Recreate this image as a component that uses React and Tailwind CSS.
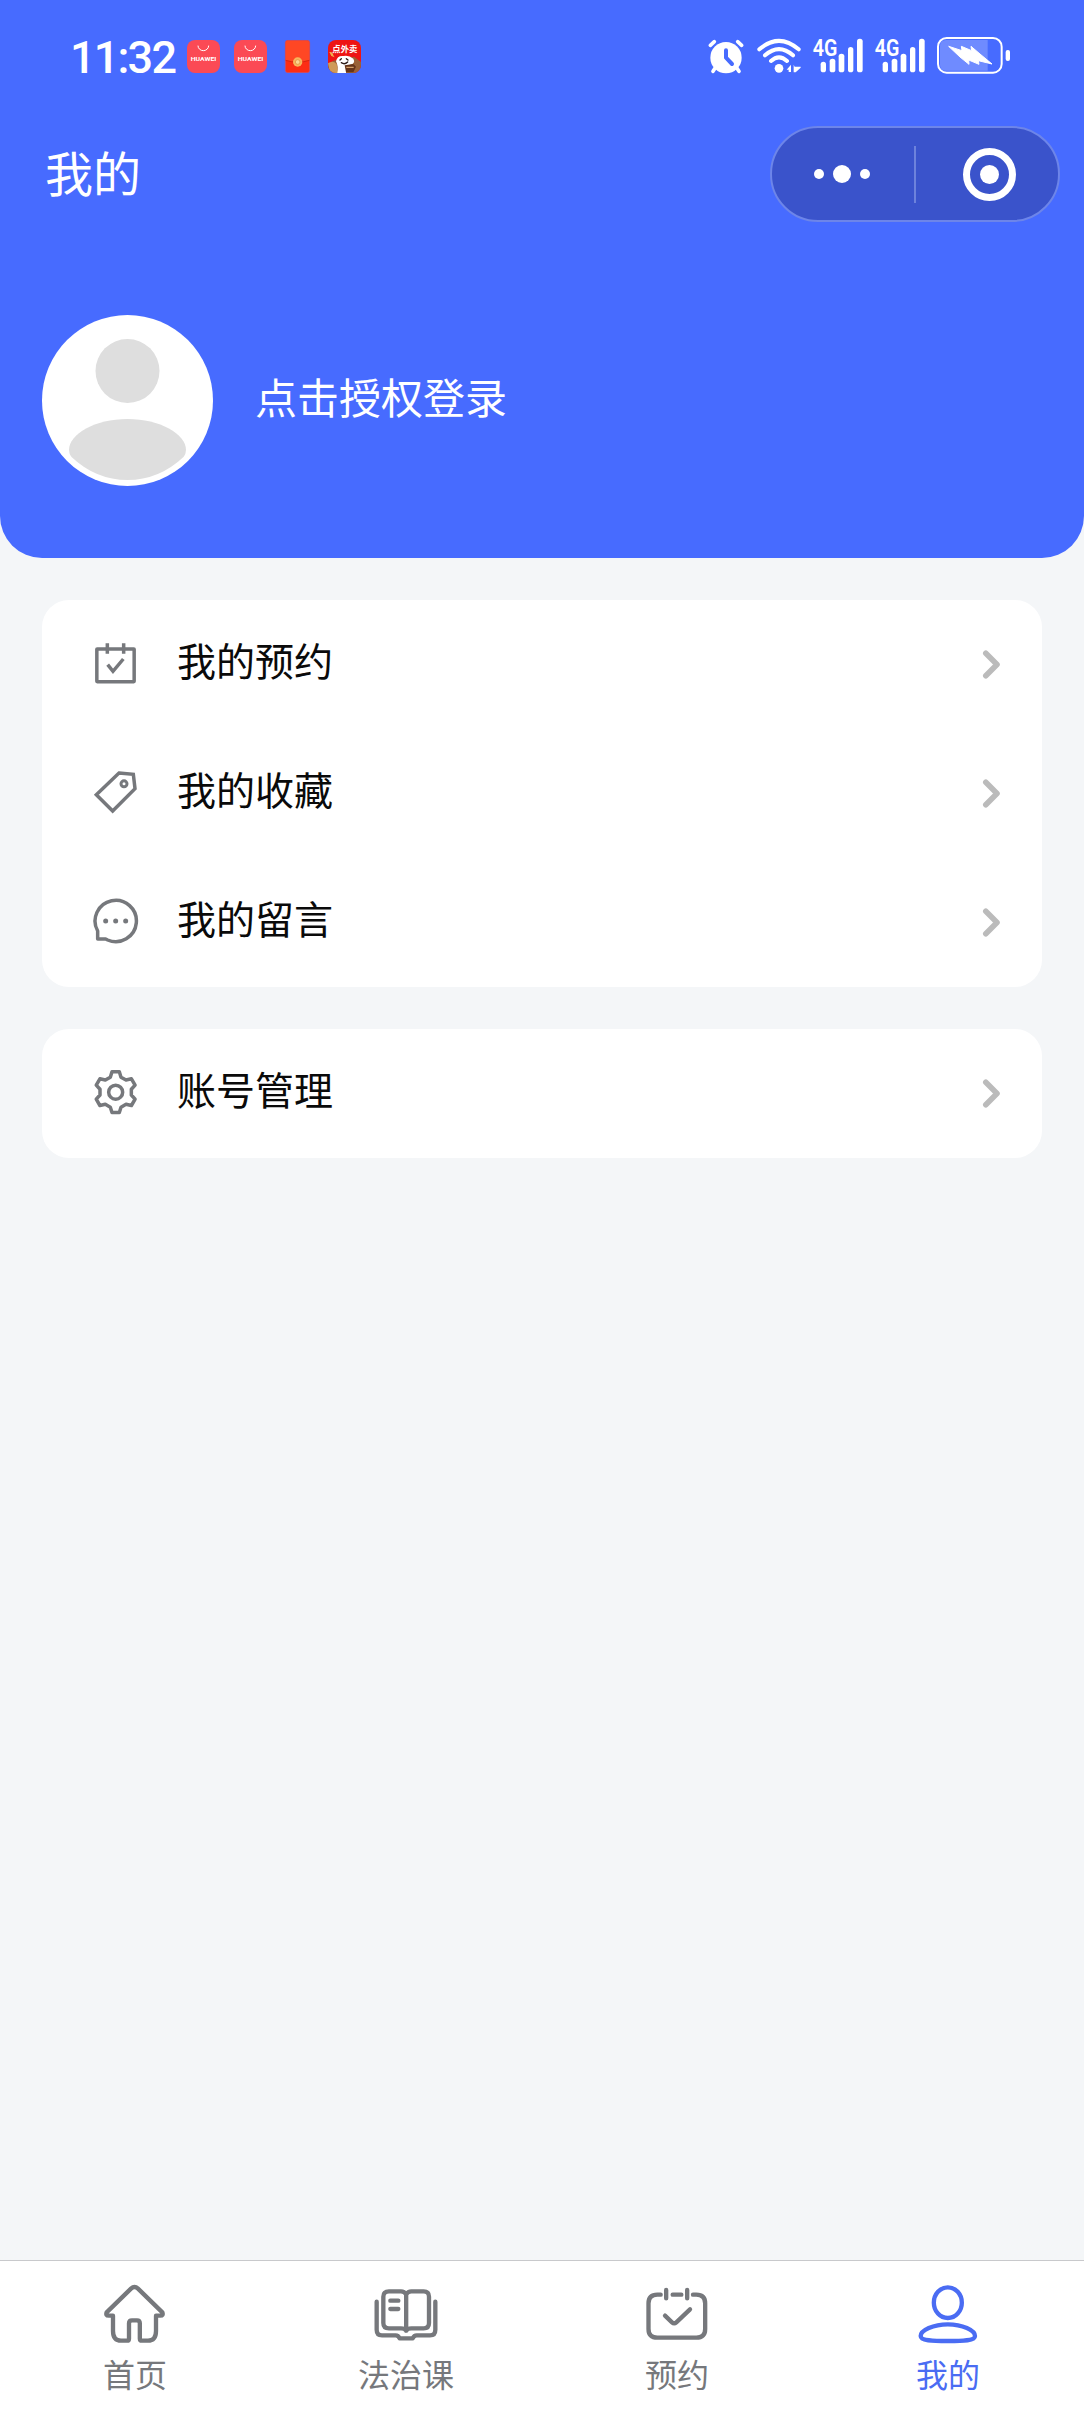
import React, { useState } from 'react';

// --- Status bar icons ---
const AlarmIcon = () => (
  <svg className="w-[39px] h-[42px]" viewBox="0 0 117 126" fill="none" strokeLinecap="round" strokeLinejoin="round">
    <circle cx="57" cy="68" r="47" fill="#fff" />
    <path d="M10 31L22 20M92 20L104 31M25 98L18 109M89 98L96 109" stroke="#fff" strokeWidth="11" />
    <path d="M57 46V68L75 87" stroke="#476bff" strokeWidth="12" />
  </svg>
);

const WifiIcon = () => (
  <svg className="w-[46px] h-[42px]" viewBox="0 0 138 126" fill="none" strokeLinecap="round">
    <path d="M10 43Q69 -8 128 43M27 61Q69 24 111 61M45 78Q69 56 93 78" stroke="#fff" strokeWidth="12" />
    <circle cx="69" cy="100" r="13" fill="#fff" />
    <path d="M92 104L105 89V111H98V104ZM113 89L116 95H134V98L119 112H113Z" fill="#fff" />
  </svg>
);

const SignalIcon = () => (
  <svg className="w-[52px] h-[42px]" viewBox="0 0 156 126" fill="#fff">
    <text x="2" y="62" fontFamily="Roboto, sans-serif" fontWeight="600" fontSize="69" textLength="74" lengthAdjust="spacingAndGlyphs">4G</text>
    <rect x="26" y="80" width="16" height="32" rx="8" />
    <rect x="53" y="71" width="17" height="41" rx="8" />
    <rect x="80" y="56" width="17" height="56" rx="8" />
    <rect x="108" y="36" width="16" height="76" rx="8" />
    <rect x="135" y="11" width="17" height="101" rx="8" />
  </svg>
);

const BatteryIcon = () => (
  <svg className="w-[76px] h-[42px]" viewBox="0 0 228 126">
    <path d="M30 15H155V107H30Q12 107 12 89V33Q12 15 30 15Z" fill="#fff" fillOpacity="0.22" />
    <rect x="6" y="9" width="191" height="104" rx="26" fill="none" stroke="#fff" strokeWidth="6" />
    <rect x="209" y="45" width="13" height="33" rx="6" fill="#fff" />
    <path d="M38 34L78 47L76 34L107 47L105 34L132 57L168 87L127 77L129 88L98 75L99 88L72 66Z" fill="#fff" stroke="#fff" strokeWidth="3" strokeLinejoin="round" />
  </svg>
);

// --- Notification app icons ---
const HuaweiIcon = () => (
  <svg className="w-[33px] h-[33px]" viewBox="0 0 99 99">
    <rect width="99" height="99" rx="24" fill="#fb4a55" />
    <path d="M33 18A16 14 0 0 0 65 18" fill="none" stroke="#fff" strokeWidth="3" strokeLinecap="round" />
    <text x="11" y="64" fill="#fff" fontFamily="Roboto, sans-serif" fontWeight="700" fontSize="18" textLength="77" lengthAdjust="spacingAndGlyphs">HUAWEI</text>
  </svg>
);

const RedPacketIcon = () => (
  <svg className="w-[33px] h-[33px]" viewBox="0 0 99 99">
    <rect x="13" y="1" width="73" height="97" rx="7" fill="#fc2d14" stroke="#c9566f" strokeWidth="2" />
    <path d="M14 8Q14 2 20 2H79Q85 2 85 8V61Q50 72 14 61Z" fill="#ff4724" />
    <path d="M14 61Q50 72 85 61" fill="none" stroke="#d92410" strokeWidth="3" />
    <circle cx="50" cy="66" r="14" fill="#f7b55c" />
    <circle cx="50" cy="66" r="7" fill="#fbd592" stroke="#dd8a3c" strokeWidth="2" />
  </svg>
);

const TakeoutIcon = () => (
  <svg className="w-[33px] h-[33px]" viewBox="0 0 99 99">
    <clipPath id="takeout">
      <rect width="99" height="99" rx="24" />
    </clipPath>
    <g clipPath="url(#takeout)">
      <rect width="99" height="99" fill="#ee1414" />
      <path d="M0 76Q14 56 34 62L78 50L99 66V99H0Z" fill="#9a6136" />
      <path d="M4 36Q14 34 16 46L20 52L10 48Z" fill="#f2b04c" />
      <path d="M0 70Q14 60 26 72L30 99H6Z" fill="#cf9a58" />
      <path d="M24 64Q28 46 46 48Q62 44 76 56Q84 70 66 74Q54 78 54 99H28Q32 80 24 64Z" fill="#fff" />
      <path d="M36 60L40 56M55 56L60 60M40 68Q50 75 59 66" stroke="#2b1a17" strokeWidth="4" fill="none" strokeLinecap="round" />
      <path d="M50 76L76 72L84 80L76 97H54Z" fill="#653419" />
      <path d="M55 82H77" stroke="#d5a06a" strokeWidth="4" />
    </g>
    <text x="13" y="36" fill="#fff" fontFamily="'Noto Sans CJK SC', sans-serif" fontWeight="700" fontSize="25">点外卖</text>
  </svg>
);

// --- Menu icons ---
const menuIconProps = {
  className: 'w-12 h-12 shrink-0',
  viewBox: '0 0 144 144',
  fill: 'none',
  stroke: '#76787c',
  strokeWidth: 10.5,
};

const BookingIcon = () => (
  <svg {...menuIconProps}>
    <rect x="17.5" y="27" width="112" height="98" rx="1" strokeLinejoin="round" />
    <path d="M49 10V41M98 10V41" />
    <path d="M50 74L66 94L97 57" />
  </svg>
);

const TagIcon = () => (
  <svg {...menuIconProps}>
    <path d="M84 12L127 16L132 59L65 126L16 77Z" />
    <circle cx="99" cy="44.5" r="9" strokeWidth="9" />
  </svg>
);

const MessageIcon = () => (
  <svg {...menuIconProps}>
    <path d="M20 123V99A62 62 0 1 1 50 126L44 123Z" strokeLinejoin="round" />
    <g fill="#76787c" stroke="none">
      <circle cx="44" cy="69" r="7.5" />
      <circle cx="74" cy="69" r="7.5" />
      <circle cx="104" cy="69" r="7.5" />
    </g>
  </svg>
);

// One tooth, repeated every 60 degrees
const tooth = [[-16, -45], [-11, -61], [11, -61], [16, -45]];
const gearPoints = [0, 1, 2, 3, 4, 5]
  .flatMap((i) => {
    const a = (i * Math.PI) / 3;
    return tooth.map(([x, y]) => [
      74 + x * Math.cos(a) - y * Math.sin(a),
      69.5 + x * Math.sin(a) + y * Math.cos(a),
    ]);
  })
  .map(([x, y]) => `${x.toFixed(1)},${y.toFixed(1)}`)
  .join(' ');

const GearIcon = () => (
  <svg {...menuIconProps}>
    <polygon points={gearPoints} strokeLinejoin="round" />
    <circle cx="74" cy="69.5" r="21" />
  </svg>
);

const ChevronIcon = () => (
  <svg className="w-6 h-[34px] shrink-0" viewBox="0 0 24 34" fill="none" stroke="#bbb" strokeWidth="5.6" strokeLinecap="round" strokeLinejoin="round">
    <path d="M6.8 6.2L18 17.5L6.8 28.8" />
  </svg>
);

// --- Tab icons ---
const tabIconProps = {
  className: 'w-[66px] h-[66px]',
  viewBox: '0 0 198 198',
  fill: 'none',
  stroke: 'currentColor',
  strokeWidth: 13,
  strokeLinecap: 'round',
  strokeLinejoin: 'round',
};

const HomeIcon = () => (
  <svg {...tabIconProps}>
    <path d="M87 23Q97.5 13 108 23L181 94Q185 104 175 104H162V150Q162 179 138 179H120Q113.5 179 113.5 173V127Q113.5 118 105 118H90Q81 118 81 127V173Q81 179 75 179H57Q33 179 33 150V104H20Q10 104 14 94Z" />
  </svg>
);

const BookIcon = () => (
  <svg {...tabIconProps}>
    <path d="M99.5 149V40Q94 31 84 31H48Q31 31 31 47V126Q31 142 48 142H84Q96 142 99.5 149Q103 142 115 142H152Q168 142 168 126V47Q168 31 152 31H115Q105 31 99.5 40" />
    <path d="M11 62V146Q11 163 27 163H68Q76 163 80 172H119Q123 163 131 163H171Q187 163 187 146V62" />
    <path d="M52 59H76M52 84H76" />
  </svg>
);

const CalendarIcon = () => (
  <svg {...tabIconProps}>
    <path d="M50 41H40Q13.5 41 13.5 67V144Q13.5 170 40 170H157Q183.5 170 183.5 144V67Q183.5 41 157 41H147M86 41H112" />
    <path d="M66.5 27V52M129.5 27V52" />
    <path d="M63 104L84 124Q90.5 130 97 124L138 85" />
  </svg>
);

const UserIcon = () => (
  <svg {...tabIconProps}>
    <ellipse cx="98.5" cy="65" rx="42" ry="46" />
    <path d="M98.5 130C55 130 17 148 17 165C17 179 50 180 98.5 180C147 180 180 179 180 165C180 148 142 130 98.5 130Z" />
  </svg>
);

const menuGroups = [
  [
    { label: '我的预约', icon: BookingIcon },
    { label: '我的收藏', icon: TagIcon },
    { label: '我的留言', icon: MessageIcon },
  ],
  [{ label: '账号管理', icon: GearIcon }],
];

const tabs = [
  { label: '首页', icon: HomeIcon },
  { label: '法治课', icon: BookIcon },
  { label: '预约', icon: CalendarIcon },
  { label: '我的', icon: UserIcon },
];

const StatusBar = () => (
  <div className="h-[113px] pl-[70px] pr-[72px] flex items-start justify-between">
    <div className="flex items-start pt-[35px]">
      <span className="w-[117px] h-11 pt-px font-[Roboto,sans-serif] font-medium text-[45px] leading-11 tracking-[-1.8px] whitespace-nowrap">11:32</span>
      <div className="flex gap-[14px] pt-[5px]">
        <HuaweiIcon />
        <HuaweiIcon />
        <RedPacketIcon />
        <TakeoutIcon />
      </div>
    </div>
    <div className="flex gap-[10px] pt-[35px]">
      <AlarmIcon />
      <WifiIcon />
      <SignalIcon />
      <SignalIcon />
      <BatteryIcon />
    </div>
  </div>
);

const Capsule = () => (
  <div className="w-[290px] h-24 rounded-full border-2 border-[#6d85e9] bg-[#3a53cb] flex items-center">
    <div className="w-[142px] pr-[2px] flex items-center justify-center gap-[9px]">
      <span className="w-[10px] h-[10px] rounded-full bg-white"></span>
      <span className="w-[18px] h-[18px] rounded-full bg-white"></span>
      <span className="w-[10px] h-[10px] rounded-full bg-white"></span>
    </div>
    <div className="w-[2px] h-[57px] bg-[#6d82dc]"></div>
    <div className="flex-1 flex items-center justify-center pl-[5px]">
      <div className="w-[53px] h-[53px] rounded-full border-[7px] border-white flex items-center justify-center">
        <span className="w-[19px] h-[19px] rounded-full bg-white"></span>
      </div>
    </div>
  </div>
);

const Avatar = () => (
  <svg className="w-[171px] h-[171px] rounded-full bg-white" viewBox="0 0 171 171" fill="#dedede">
    <circle cx="85.5" cy="56" r="32" />
    <path d="M85.5 104C118 104 144 119 144 135Q144 139 141.5 142Q117 165 85.5 165Q54 165 29.5 142Q27 139 27 135C27 119 53 104 85.5 104Z" />
  </svg>
);

const App = () => {
  const [active, setActive] = useState(3);

  return (
    <div className="w-[1084px] h-[2412px] flex flex-col bg-[#f4f6f8] font-['Noto_Sans_CJK_SC',sans-serif] overflow-hidden">
      <header className="h-[558px] shrink-0 bg-[#476bff] text-white rounded-b-[42px]">
        <StatusBar />
        <div className="h-[122px] pl-[45px] pr-6 flex items-center justify-between">
          <h1 className="pb-[7px] text-[48px] leading-none">我的</h1>
          <Capsule />
        </div>
        <div className="pt-20 px-[42px] flex items-center">
          <Avatar />
          <span className="ml-[42px] pb-[10px] text-[42px] leading-none">点击授权登录</span>
        </div>
      </header>

      <main className="flex-1 px-[42px] pt-[42px] space-y-[42px]">
        {menuGroups.map((group, i) => (
          <div key={i} className="bg-white rounded-[27px]">
            {group.map(({ label, icon: Icon }) => (
              <div key={label} className="h-[129px] pl-[49px] pr-[39px] pb-px flex items-center">
                <Icon />
                <span className="flex-1 ml-[38px] pb-[9px] text-[39px] leading-none text-[#0a0a0a]">{label}</span>
                <ChevronIcon />
              </div>
            ))}
          </div>
        ))}
      </main>

      <nav className="h-[152px] shrink-0 bg-white border-t border-[#c8c9cc] grid grid-cols-4">
        {tabs.map(({ label, icon: Icon }, i) => (
          <button
            key={label}
            onClick={() => setActive(i)}
            className={`pt-5 pr-px flex flex-col items-center ${active === i ? 'text-[#4a6cf3]' : 'text-[#76787c]'}`}
          >
            <Icon />
            <span className="mt-[10px] text-[32px] leading-none">{label}</span>
          </button>
        ))}
      </nav>
    </div>
  );
};

export default App;
